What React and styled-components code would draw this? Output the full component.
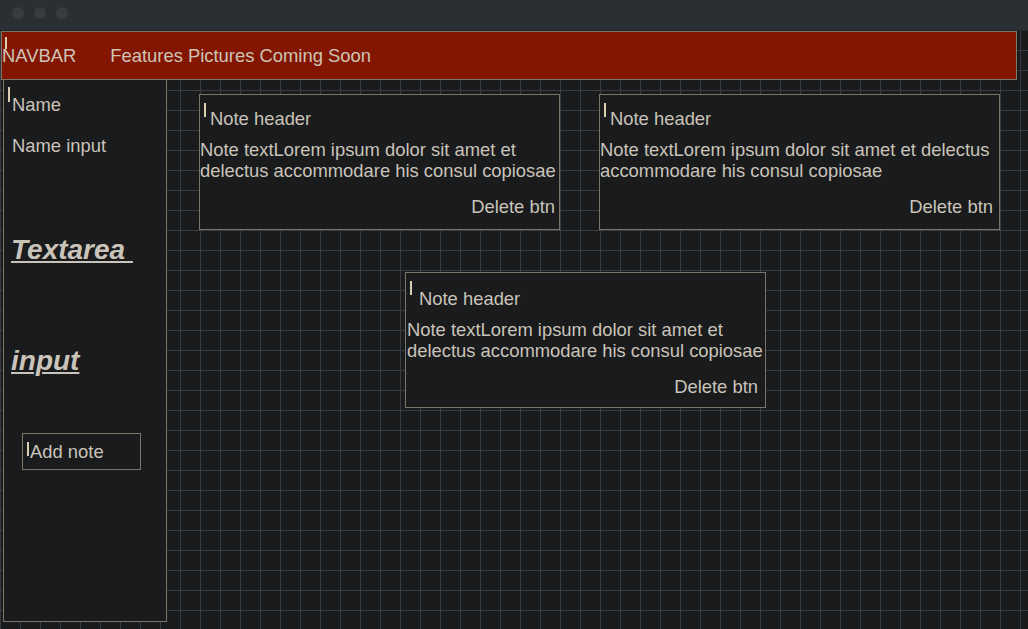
import React from "react";
import styled, { createGlobalStyle } from "styled-components";

const Global = createGlobalStyle`
  html, body {
    margin: 0;
    padding: 0;
    background: #1a1b1d;
    overflow: hidden;
  }
  body {
    font-family: "Liberation Sans", Arial, sans-serif;
    color: #c9c3b9;
  }
  * { box-sizing: border-box; }
`;

const TEXT = "18.4px";

const Window = styled.div`
  width: 1028px;
  height: 629px;
  display: flex;
  flex-direction: column;
  overflow: hidden;
`;

const TitleBar = styled.div`
  height: 31px;
  flex: none;
  background: #2b2e32;
  border-bottom: 1px solid #232629;
  display: flex;
  align-items: center;
  gap: 10px;
  padding: 0 0 4px 12px;
`;

const Dot = styled.span`
  width: 12px;
  height: 12px;
  border-radius: 50%;
  background: #383b3f;
`;

const Page = styled.div`
  flex: 1;
  display: flex;
  flex-direction: column;
  background-color: #1a1b1d;
  background-image:
    linear-gradient(to right, #393c3f 1px, transparent 1px),
    linear-gradient(to bottom, #393c3f 1px, transparent 1px);
  background-size: 20px 20px;
  background-position: 0 19px;
`;

const Caret = styled.span`
  position: absolute;
  left: ${(p) => p.$x}px;
  top: ${(p) => p.$y}px;
  width: 2px;
  height: ${(p) => p.$h || 14}px;
  background: #d9cfb0;
`;

const Navbar = styled.nav`
  position: relative;
  margin-left: 1px;
  width: 1016px;
  height: 49px;
  flex: none;
  background: #831600;
  border: 1px solid #7c7466;
  display: flex;
  align-items: center;
  gap: 34px;
  font-size: ${TEXT};
`;

const NavItem = styled.span`
  color: #cdc4b8;
`;

const Main = styled.div`
  flex: 1;
  display: flex;
  align-items: flex-start;
`;

const Sidebar = styled.aside`
  position: relative;
  margin-left: 3px;
  width: 164px;
  height: 542px;
  flex: none;
  background: #1a1b1d;
  border: 1px solid #7c7466;
  border-top: none;
  display: flex;
  flex-direction: column;
  align-items: flex-start;
  padding: 15px 0 0 8px;
`;

const Label = styled.div`
  font-size: ${TEXT};
  line-height: 20px;
  margin-top: ${(p) => p.$top || 0}px;
`;

const Heading = styled.div`
  font-size: 28px;
  font-weight: bold;
  font-style: italic;
  text-decoration: underline;
  text-decoration-thickness: 2px;
  text-underline-offset: 2px;
  line-height: normal;
  margin-left: -1px;
  margin-top: ${(p) => p.$top}px;
`;

const AddButton = styled.button`
  position: relative;
  margin: 56px 0 0 10px;
  width: 119px;
  height: 37px;
  background: #1a1b1d;
  border: 1px solid #7c7466;
  color: #c9c3b9;
  font-family: inherit;
  font-size: ${TEXT};
  display: flex;
  align-items: center;
  padding: 0 0 0 7px;
  cursor: pointer;
`;

const Board = styled.div`
  position: relative;
  flex: 1;
  align-self: stretch;
`;

const Note = styled.div`
  position: absolute;
  left: ${(p) => p.$x}px;
  top: ${(p) => p.$y}px;
  width: ${(p) => p.$w}px;
  height: 136px;
  background: #1a1b1d;
  border: 1px solid #7c7466;
  display: flex;
  flex-direction: column;
  font-size: ${TEXT};
  line-height: 21px;
`;

const NoteHeader = styled.div`
  margin-top: ${(p) => p.$top}px;
  padding-left: ${(p) => p.$pad}px;
`;

const NoteText = styled.div`
  margin-top: 10px;
  padding-left: ${(p) => p.$pad}px;
`;

const DeleteButton = styled.button`
  align-self: flex-end;
  margin-top: 15px;
  margin-right: ${(p) => p.$pad}px;
  background: none;
  border: none;
  padding: 0;
  color: #c9c3b9;
  font-family: inherit;
  font-size: ${TEXT};
  line-height: 21px;
  cursor: pointer;
`;

const notes = [
  { id: 1, x: 32, y: 14, w: 361, headTop: 13, headPad: 10, bodyPad: 0, btnPad: 4 },
  { id: 2, x: 432, y: 14, w: 401, headTop: 13, headPad: 10, bodyPad: 0, btnPad: 6 },
  { id: 3, x: 238, y: 192, w: 361, headTop: 15, headPad: 13, bodyPad: 1, btnPad: 7 },
];

const BODY =
  "Note textLorem ipsum dolor sit amet et delectus accommodare his consul copiosae";

export default function App() {
  return (
    <>
      <Global />
      <Window>
        <TitleBar>
          <Dot />
          <Dot />
          <Dot />
        </TitleBar>
        <Page>
          <Navbar>
            <Caret $x={3} $y={5} $h={12} />
            <NavItem>NAVBAR</NavItem>
            <NavItem>Features Pictures Coming Soon</NavItem>
          </Navbar>
          <Main>
            <Sidebar>
              <Caret $x={4} $y={7} $h={15} />
              <Label>Name</Label>
              <Label $top={21}>Name input</Label>
              <Heading $top={78}>Textarea&nbsp;</Heading>
              <Heading $top={79}>input</Heading>
              <AddButton>
                <Caret $x={4} $y={8} $h={14} />
                Add note
              </AddButton>
            </Sidebar>
            <Board>
              {notes.map((n) => (
                <Note key={n.id} $x={n.x} $y={n.y} $w={n.w}>
                  <Caret $x={4} $y={8} $h={14} />
                  <NoteHeader $top={n.headTop} $pad={n.headPad}>
                    Note header
                  </NoteHeader>
                  <NoteText $pad={n.bodyPad}>{BODY}</NoteText>
                  <DeleteButton $pad={n.btnPad}>Delete btn</DeleteButton>
                </Note>
              ))}
            </Board>
          </Main>
        </Page>
      </Window>
    </>
  );
}
